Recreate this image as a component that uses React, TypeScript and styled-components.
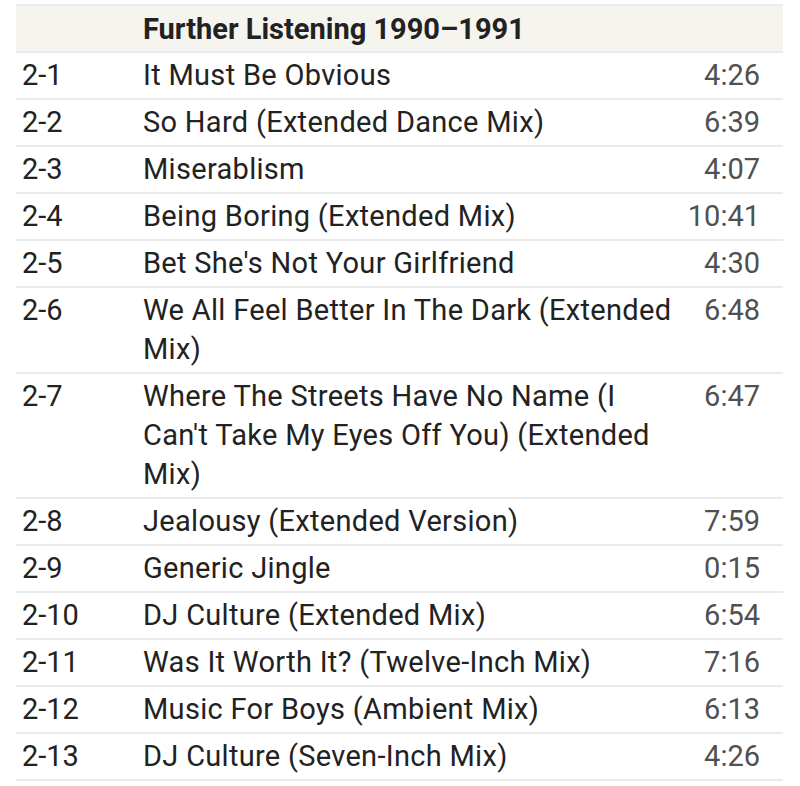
import React from "react";
import styled, { createGlobalStyle } from "styled-components";

const GlobalStyle = createGlobalStyle`
  body {
    margin: 0;
    background: #ffffff;
    font-family: Roboto, "Noto Sans", sans-serif;
  }
`;

const Table = styled.table`
  border-collapse: collapse;
  width: 767px;
  margin: 4px 0 0 16px;
  table-layout: fixed;
  font-size: 29px;
  color: #222222;
  border-top: 2px solid #ebebeb;
`;

const Row = styled.tr<{ $header?: boolean }>`
  background: ${(p) => (p.$header ? "#f5f4ef" : "transparent")};
  border-bottom: 2px solid #ebebeb;
`;

const Cell = styled.td<{ $col: "no" | "title" | "time" }>`
  vertical-align: top;
  line-height: 39px;
  padding: ${(p) =>
    p.$col === "no"
      ? "3px 0 3px 6px"
      : p.$col === "time"
      ? "3px 23px 3px 0"
      : "3px 0 3px 0"};
  text-align: ${(p) => (p.$col === "time" ? "right" : "left")};
  letter-spacing: ${(p) => (p.$col === "title" ? "0.3px" : "0")};
  color: ${(p) => (p.$col === "time" ? "#505050" : "#222222")};
`;

const HeadCell = styled.th`
  text-align: left;
  font-weight: 700;
  line-height: 38px;
  padding: 4px 0 3px 0;
`;

const tracks: [string, string, string][] = [
  ["2-1", "It Must Be Obvious", "4:26"],
  ["2-2", "So Hard (Extended Dance Mix)", "6:39"],
  ["2-3", "Miserablism", "4:07"],
  ["2-4", "Being Boring (Extended Mix)", "10:41"],
  ["2-5", "Bet She's Not Your Girlfriend", "4:30"],
  ["2-6", "We All Feel Better In The Dark (Extended Mix)", "6:48"],
  ["2-7", "Where The Streets Have No Name (I Can't Take My Eyes Off You) (Extended Mix)", "6:47"],
  ["2-8", "Jealousy (Extended Version)", "7:59"],
  ["2-9", "Generic Jingle", "0:15"],
  ["2-10", "DJ Culture (Extended Mix)", "6:54"],
  ["2-11", "Was It Worth It? (Twelve-Inch Mix)", "7:16"],
  ["2-12", "Music For Boys (Ambient Mix)", "6:13"],
  ["2-13", "DJ Culture (Seven-Inch Mix)", "4:26"],
];

function App() {
  return (
    <>
      <GlobalStyle />
      <Table>
        <colgroup>
          <col style={{ width: 127 }} />
          <col style={{ width: 534 }} />
          <col />
        </colgroup>
        <thead>
          <Row $header>
            <HeadCell />
            <HeadCell colSpan={2}>Further Listening 1990–1991</HeadCell>
          </Row>
        </thead>
        <tbody>
          {tracks.map(([no, title, time]) => (
            <Row key={no}>
              <Cell $col="no">{no}</Cell>
              <Cell $col="title">{title}</Cell>
              <Cell $col="time">{time}</Cell>
            </Row>
          ))}
        </tbody>
      </Table>
    </>
  );
}

export default App;
